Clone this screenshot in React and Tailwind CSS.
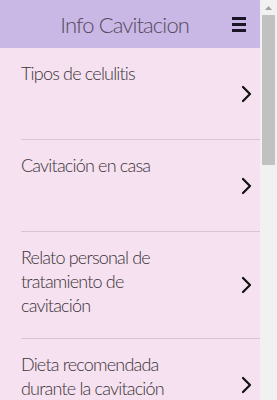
import React from 'react';

const items = [
  { id: 1, title: 'Tipos de celulitis' },
  { id: 2, title: 'Cavitación en casa' },
  { id: 3, title: 'Relato personal de tratamiento de cavitación' },
  { id: 4, title: 'Dieta recomendada durante la cavitación' },
];

const Chevron = () => (
  <svg width="11" height="18" viewBox="0 0 11 18" fill="none">
    <path d="M2 2l7 7-7 7" stroke="#111" strokeWidth="2.2" strokeLinecap="round" strokeLinejoin="round" />
  </svg>
);

const App = () => {
  return (
    <div className="h-[400px] w-[277px] flex overflow-hidden" style={{ fontFamily: 'Lato, "Open Sans", sans-serif' }}>
      <div className="flex-1 flex flex-col bg-[#f5e1ef]">
        {/* header */}
        <div className="h-[48px] shrink-0 bg-[#c9b7e5] flex items-center justify-end pr-[14px]">
          <h1 className="text-[22px] font-light text-[#564a60] tracking-[-0.04em] mr-[43px]">Info Cavitacion</h1>
          <div className="flex flex-col gap-[3px]">
            <span className="block w-[14px] h-[3px] bg-[#1b1627]" />
            <span className="block w-[14px] h-[3px] bg-[#1b1627]" />
            <span className="block w-[14px] h-[3px] bg-[#1b1627]" />
          </div>
        </div>

        {/* list */}
        <div className="flex flex-col">
          {items.map((item) => (
            <div key={item.id} className="pl-[21px]">
              <div className="flex items-center justify-between min-h-[92px] pr-[8px] border-b border-[#d9c5d2]">
                <p className="pt-[13px] pb-[21px] text-[18px] font-light leading-[24px] text-[#3b3339] tracking-[-0.045em] w-[160px] self-start">
                  {item.title}
                </p>
                <Chevron />
              </div>
            </div>
          ))}
        </div>
      </div>

      {/* scrollbar */}
      <div className="w-[17px] shrink-0 bg-[#f1f1f1] flex flex-col items-center">
        <div className="h-[15px] flex items-center justify-center">
          <svg width="7" height="4" viewBox="0 0 7 4">
            <path d="M0 4L3.5 0L7 4Z" fill="#a3a3a3" />
          </svg>
        </div>
        <div className="w-[13px] h-[150px] bg-[#c1c1c1]" />
      </div>
    </div>
  );
};

export default App;
